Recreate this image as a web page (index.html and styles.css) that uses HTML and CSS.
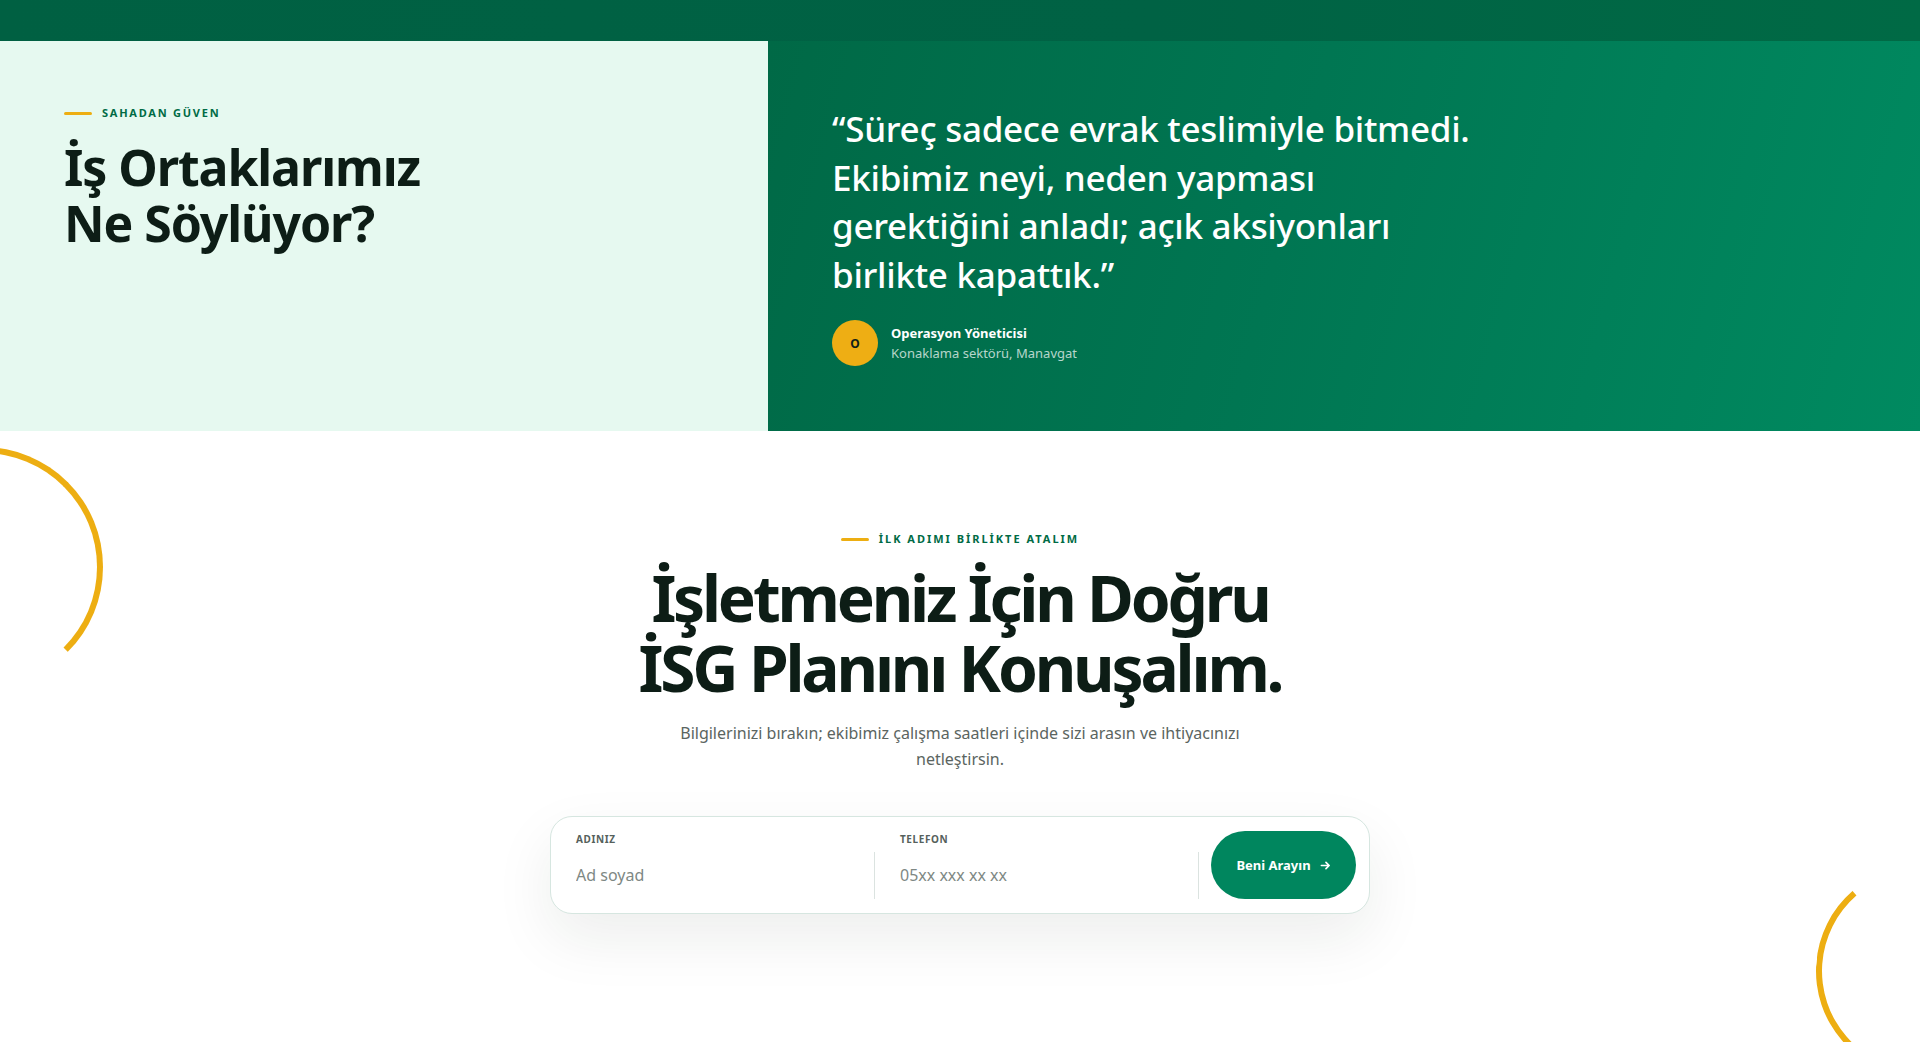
FILE: index.html
```html
<!DOCTYPE html>
<html lang="tr">
<head>
<meta charset="utf-8">
<title>İş Ortaklarımız</title>
<link rel="stylesheet" href="styles.css">
</head>
<body>
<div class="top-band"></div>
<section class="testimonials">
  <div class="testimonials-intro">
    <p class="eyebrow"><span class="eyebrow-line"></span>SAHADAN GÜVEN</p>
    <h2 class="intro-title">İş Ortaklarımız<br>Ne Söylüyor?</h2>
  </div>
  <div class="testimonial-card">
    <blockquote class="quote">“Süreç sadece evrak teslimiyle bitmedi. Ekibimiz neyi, neden yapması gerektiğini anladı; açık aksiyonları birlikte kapattık.”</blockquote>
    <div class="author">
      <div class="avatar">O</div>
      <div class="author-info">
        <p class="author-name">Operasyon Yöneticisi</p>
        <p class="author-meta">Konaklama sektörü, Manavgat</p>
      </div>
    </div>
  </div>
</section>
<section class="cta">
  <span class="ring ring-left"></span>
  <span class="ring ring-right"></span>
  <p class="eyebrow eyebrow-center"><span class="eyebrow-line"></span>İLK ADIMI BİRLİKTE ATALIM</p>
  <h2 class="cta-title">İşletmeniz İçin Doğru<br>İSG Planını Konuşalım.</h2>
  <p class="cta-text">Bilgilerinizi bırakın; ekibimiz çalışma saatleri içinde sizi arasın ve ihtiyacınızı netleştirsin.</p>
  <form class="cta-form">
    <label class="field">
      <span class="field-label">ADINIZ</span>
      <input class="field-input" type="text" placeholder="Ad soyad">
    </label>
    <label class="field">
      <span class="field-label">TELEFON</span>
      <input class="field-input" type="tel" placeholder="05xx xxx xx xx">
    </label>
    <button class="cta-button" type="button">Beni Arayın
      <svg class="arrow" viewBox="0 0 12 12" width="11" height="11" aria-hidden="true"><path d="M1.5 6h8.5M6.5 2.5 10 6l-3.5 3.5" fill="none" stroke="currentColor" stroke-width="1.8" stroke-linecap="round" stroke-linejoin="round"/></svg>
    </button>
  </form>
</section>
</body>
</html>
```
FILE: styles.css
```css
* { box-sizing: border-box; }
html, body { margin: 0; padding: 0; }
body {
  font-family: "Noto Sans", "Open Sans", sans-serif;
  color: #0e1f18;
  background: #fff;
  height: 1042px;
  overflow: hidden;
}
p, h2, blockquote { margin: 0; }

.top-band {
  height: 41px;
  background: linear-gradient(90deg, #006042 0%, #006244 60%, #006a45 100%);
}

.testimonials {
  display: grid;
  grid-template-columns: 768px 1fr;
  height: 390px;
}
.testimonials-intro {
  background: #e6f9f0;
  padding: 64px 64px;
}
.eyebrow {
  display: flex;
  align-items: center;
  gap: 10px;
  font-size: 11px;
  line-height: 16px;
  font-weight: 700;
  letter-spacing: 0.16em;
  color: #006b45;
}
.eyebrow-line {
  width: 28px;
  height: 3px;
  background: #edae12;
  border-radius: 2px;
}
.intro-title {
  margin-top: 18px;
  font-size: 50px;
  line-height: 56px;
  font-weight: 700;
  letter-spacing: -0.022em;
  color: #0d1d16;
}
.testimonial-card {
  background: linear-gradient(105deg, #006946 0%, #007652 45%, #008a60 100%);
  padding: 64px 64px;
  color: #fff;
}
.quote {
  max-width: 650px;
  font-size: 35px;
  line-height: 48.6px;
  font-weight: 500;
  letter-spacing: -0.008em;
}
.author {
  margin-top: 21px;
  display: flex;
  align-items: center;
  gap: 13px;
}
.avatar {
  width: 46px;
  height: 46px;
  border-radius: 50%;
  background: #eeae14;
  color: #10201a;
  display: flex;
  align-items: center;
  justify-content: center;
  font-size: 12px;
  font-weight: 700;
}
.author-name {
  font-size: 13px;
  line-height: 20px;
  font-weight: 700;
}
.author-meta {
  font-size: 13px;
  line-height: 21px;
  color: rgba(255, 255, 255, 0.72);
}

.cta {
  position: relative;
  height: 611px;
  padding-top: 100px;
  display: flex;
  flex-direction: column;
  align-items: center;
  text-align: center;
}
.ring {
  position: absolute;
  border-radius: 50%;
  border: 6px solid transparent;
}
.ring-left {
  left: -137px;
  top: 16px;
  width: 240px;
  height: 240px;
  border-top-color: #edae12;
  border-right-color: #edae12;
}
.ring-right {
  left: 1816px;
  top: 434px;
  width: 212px;
  height: 212px;
  border-bottom-color: #edae12;
  border-left-color: #edae12;
  transform: rotate(4deg);
}
.eyebrow-center {
  justify-content: center;
  letter-spacing: 0.18em;
}
.cta-title {
  margin-top: 16px;
  font-size: 64px;
  line-height: 70px;
  font-weight: 700;
  letter-spacing: -0.05em;
  color: #0d1d16;
}
.cta-text {
  margin-top: 17px;
  max-width: 600px;
  font-size: 16px;
  line-height: 26px;
  color: #5b6561;
}
.cta-form {
  margin-top: 44px;
  width: 820px;
  display: flex;
  align-items: stretch;
  padding: 14px 13px 14px 0;
  background: #fff;
  border: 1px solid #d6e6e0;
  border-radius: 22px;
  box-shadow: 0 24px 60px rgba(20, 40, 30, 0.08);
  text-align: left;
}
.field {
  flex: 1;
  display: flex;
  flex-direction: column;
  padding-left: 25px;
}
.field-label {
  font-size: 10px;
  line-height: 16px;
  font-weight: 700;
  letter-spacing: 0.06em;
  color: #56615c;
}
.field-input {
  margin-top: 5px;
  height: 47px;
  border: 0;
  border-right: 1px solid #dbe3e0;
  padding: 0 0 2px;
  font-family: inherit;
  font-size: 16px;
  color: #0e1f18;
  background: transparent;
  outline: none;
}
.field-input::placeholder { color: #7e8884; }
.cta-button {
  margin-left: 12px;
  width: 145px;
  border: 0;
  border-radius: 34px;
  background: #00865e;
  color: #fff;
  font-family: inherit;
  font-size: 13px;
  font-weight: 700;
  display: flex;
  align-items: center;
  justify-content: center;
  gap: 9px;
}
.arrow { display: block; }
```
